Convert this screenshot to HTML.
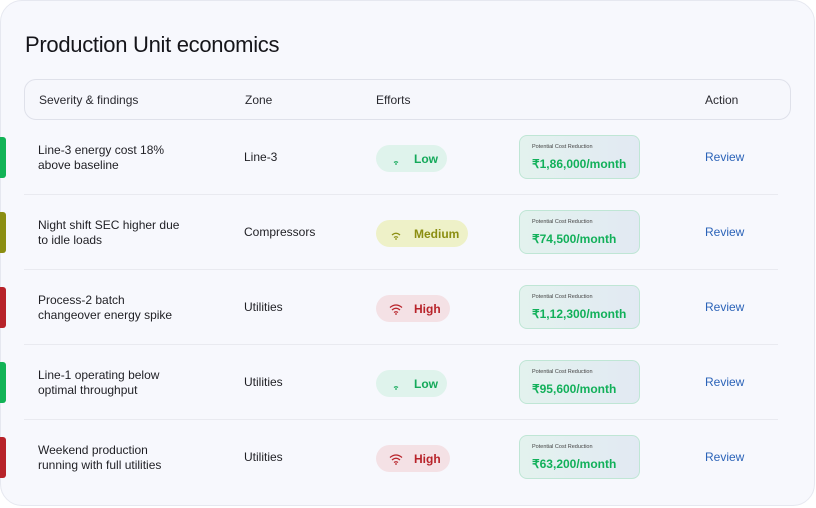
<!DOCTYPE html>
<html><head><meta charset="utf-8"><style>
*{box-sizing:border-box;margin:0;padding:0}
body{width:816px;height:508px;background:#fff;font-family:"Liberation Sans",sans-serif;position:relative;overflow:hidden;color:#1f1f24}
.card{position:absolute;left:0;top:0;width:815px;height:506px;background:#f7f8fd;border:1px solid #e6e8f0;border-radius:22px}
h1{position:absolute;left:25px;top:32px;font-size:22px;font-weight:normal;letter-spacing:-0.3px;color:#15151a}
.hdr{position:absolute;left:24px;top:79px;width:767px;height:41px;border:1px solid #dfe1ea;border-radius:12px;background:#f6f7fc}
.hdr span{position:absolute;top:13px;font-size:12px;color:#2a2a30}
.row{position:absolute;left:0;width:816px;height:75px}
.bar{position:absolute;left:0;top:17px;width:6px;height:41px;border-radius:0 3px 3px 0}
.f{position:absolute;left:38px;top:23px;font-size:12px;line-height:14.5px;color:#1f1f24}
.z{position:absolute;left:244px;top:30px;font-size:12px;color:#1f1f24}
.pill{position:absolute;left:376px;top:25px;height:27px;border-radius:14px;font-size:12px;font-weight:bold;padding:0 9px 0 13px;display:flex;align-items:center;gap:11px}
.pill svg{width:14px;height:12px}
.cost{position:absolute;left:519px;top:15px;width:121px;height:44px;border:1px solid #bfe6d5;border-radius:8px;background:linear-gradient(90deg,#e3f2ee,#e2e9f3)}
.cost .l{position:absolute;left:12px;top:8px;font-size:5.5px;color:#444}
.cost .v{position:absolute;left:12px;top:21px;font-size:12px;font-weight:bold;color:#12b05a}
.rv{position:absolute;left:705px;top:30px;font-size:12px;color:#2b63b8}
.div{position:absolute;left:24px;bottom:0;width:754px;height:1px;background:#e9eaf0}
</style></head><body>
<div class="card"></div>
<h1>Production Unit economics</h1>
<div class="hdr"><span style="left:14px">Severity &amp; findings</span><span style="left:220px">Zone</span><span style="left:351px">Efforts</span><span style="left:680px">Action</span></div>

<div class="row" style="top:120px"><div class="bar" style="background:#12b356"></div><div class="f">Line-3 energy cost 18%<br>above baseline</div><div class="z">Line-3</div>
<div class="pill" style="background:#dff3ec;color:#14a95a"><svg viewBox="0 0 14 12"><path d="M5 9.5q2-1.5 4 0" stroke="#14a95a" stroke-width="1.3" fill="none"/><circle cx="7" cy="11" r="0.9" fill="#14a95a"/></svg>Low</div>
<div class="cost"><div class="l">Potential Cost Reduction</div><div class="v">₹1,86,000/month</div></div><div class="rv">Review</div><div class="div"></div></div>

<div class="row" style="top:195px"><div class="bar" style="background:#8b8e12"></div><div class="f">Night shift SEC higher due<br>to idle loads</div><div class="z">Compressors</div>
<div class="pill" style="background:#eef1c8;color:#8b8e12"><svg viewBox="0 0 14 12"><path d="M3 7q4-3.5 8 0M5 9.5q2-1.5 4 0" stroke="#8b8e12" stroke-width="1.3" fill="none"/><circle cx="7" cy="11" r="0.9" fill="#8b8e12"/></svg>Medium</div>
<div class="cost"><div class="l">Potential Cost Reduction</div><div class="v">₹74,500/month</div></div><div class="rv">Review</div><div class="div"></div></div>

<div class="row" style="top:270px"><div class="bar" style="background:#b8232a"></div><div class="f">Process-2 batch<br>changeover energy spike</div><div class="z">Utilities</div>
<div class="pill" style="background:#f4e1e5;color:#b8232a"><svg viewBox="0 0 14 12"><path d="M1 4.5q6-5 12 0M3 7q4-3.5 8 0M5 9.5q2-1.5 4 0" stroke="#b8232a" stroke-width="1.3" fill="none"/><circle cx="7" cy="11" r="0.9" fill="#b8232a"/></svg>High</div>
<div class="cost"><div class="l">Potential Cost Reduction</div><div class="v">₹1,12,300/month</div></div><div class="rv">Review</div><div class="div"></div></div>

<div class="row" style="top:345px"><div class="bar" style="background:#12b356"></div><div class="f">Line-1 operating below<br>optimal throughput</div><div class="z">Utilities</div>
<div class="pill" style="background:#dff3ec;color:#14a95a"><svg viewBox="0 0 14 12"><path d="M5 9.5q2-1.5 4 0" stroke="#14a95a" stroke-width="1.3" fill="none"/><circle cx="7" cy="11" r="0.9" fill="#14a95a"/></svg>Low</div>
<div class="cost"><div class="l">Potential Cost Reduction</div><div class="v">₹95,600/month</div></div><div class="rv">Review</div><div class="div"></div></div>

<div class="row" style="top:420px"><div class="bar" style="background:#b8232a"></div><div class="f">Weekend production<br>running with full utilities</div><div class="z">Utilities</div>
<div class="pill" style="background:#f4e1e5;color:#b8232a"><svg viewBox="0 0 14 12"><path d="M1 4.5q6-5 12 0M3 7q4-3.5 8 0M5 9.5q2-1.5 4 0" stroke="#b8232a" stroke-width="1.3" fill="none"/><circle cx="7" cy="11" r="0.9" fill="#b8232a"/></svg>High</div>
<div class="cost"><div class="l">Potential Cost Reduction</div><div class="v">₹63,200/month</div></div><div class="rv">Review</div></div>
</body></html>
